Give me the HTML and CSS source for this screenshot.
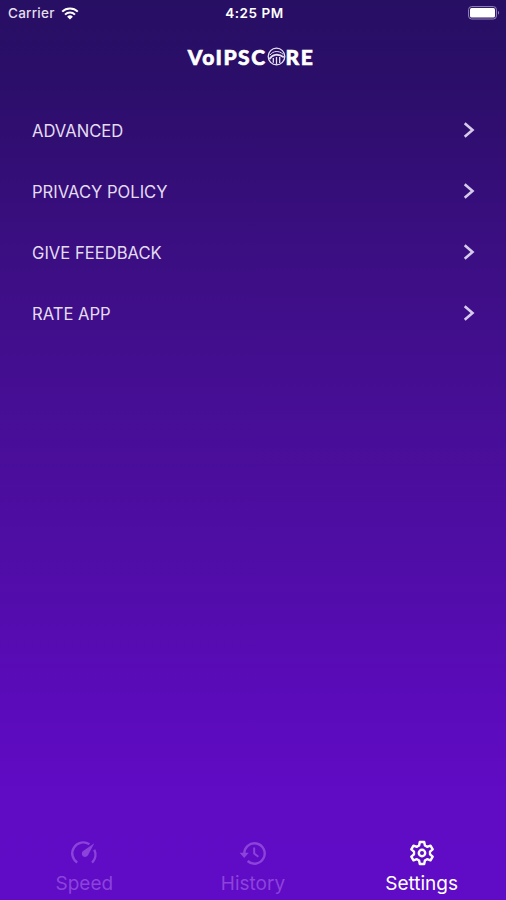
FILE: index.html
```html
<!DOCTYPE html>
<html lang="en">
<head>
  <meta charset="UTF-8">
  <meta name="viewport" content="width=device-width, initial-scale=1.0">
  <title>VoIPSCORE</title>
  <link rel="stylesheet" href="styles.css">
</head>
<body>
  <div class="status-bar">
    <div class="carrier">
      <span>Carrier</span>
      <svg width="18" height="13" viewBox="0 0 18 13" fill="none" stroke="#fff" stroke-width="2">
        <path d="M1.2 4.6a11.2 11.2 0 0 1 15.6 0M4 7.6a7.2 7.2 0 0 1 10 0"/>
        <path d="M6.1 9.7a4.2 4.2 0 0 1 5.8 0L9 12.6z" fill="#fff" stroke="none"/>
      </svg>
    </div>
    <span class="time">4:25 PM</span>
    <div class="battery">
      <svg width="33" height="14" viewBox="0 0 33 14">
        <rect x="0.6" y="0.6" width="27.8" height="12.4" rx="3" fill="none" stroke="#9689b9" stroke-width="1"/>
        <rect x="2" y="2" width="25" height="9.6" rx="1.5" fill="#fff"/>
        <path d="M30 4.8q2.2 2 0 4z" fill="#9689b9"/>
      </svg>
    </div>
  </div>

  <header class="logo">
    <span class="wordmark">VoIPSC</span>
    <svg width="19" height="19" viewBox="0 0 19 19" fill="none" stroke="#e6e1f2">
      <circle cx="9.5" cy="9.5" r="8.3" stroke-width="1.3"/>
      <path d="M3 8C6 3.8 12 3.2 16 7.2" stroke-width="1"/>
      <path d="M2.5 12C5 7.5 11 6 16.8 10.2" stroke-width="1.9"/>
      <path d="M6.3 11v4.8M9.5 10v7.5M12.7 10v6" stroke-width="1.3"/>
    </svg>
    <span class="wordmark">RE</span>
  </header>

  <nav class="menu">
    <a class="menu-item"><span>ADVANCED</span>
      <svg width="12" height="18" viewBox="0 0 12 18"><path d="M1.7 1.3L9.5 8l-7.8 6.7"/></svg></a>
    <a class="menu-item"><span>PRIVACY POLICY</span>
      <svg width="12" height="18" viewBox="0 0 12 18"><path d="M1.7 1.3L9.5 8l-7.8 6.7"/></svg></a>
    <a class="menu-item"><span>GIVE FEEDBACK</span>
      <svg width="12" height="18" viewBox="0 0 12 18"><path d="M1.7 1.3L9.5 8l-7.8 6.7"/></svg></a>
    <a class="menu-item"><span>RATE APP</span>
      <svg width="12" height="18" viewBox="0 0 12 18"><path d="M1.7 1.3L9.5 8l-7.8 6.7"/></svg></a>
  </nav>

  <footer class="tabs">
    <div class="tab">
      <svg width="28" height="28" viewBox="0 0 28 28" fill="none" stroke="currentColor" stroke-width="2.4">
        <path d="M7.2 23.6A10.9 10.9 0 0 1 19.4 5.2M24.3 10.8a10.9 10.9 0 0 1-2.2 12.8"/>
        <path d="M24.3 4.3L18 16.2a3.3 3.3 0 1 1-4.9-4.2z" fill="currentColor" stroke="none"/>
      </svg>
      <span>Speed</span>
    </div>
    <div class="tab">
      <svg width="28" height="28" viewBox="0 0 28 28" fill="none" stroke="currentColor" stroke-width="2.4">
        <path d="M5.3 15.2A10.2 10.2 0 1 1 8.6 22"/>
        <path d="M15.2 8.5v6.1l4.2 3.1" stroke-width="2"/>
        <path d="M.6 13.8h9.2L5.2 18.9z" fill="currentColor" stroke="none"/>
      </svg>
      <span>History</span>
    </div>
    <div class="tab active">
      <svg width="28" height="28" viewBox="0 0 28 28" fill="none" stroke="currentColor" stroke-width="2.4" stroke-linejoin="round">
        <path d="M11.8 3h4.4l.7 3.5 2.2 1.3 3.4-1.2 2.2 3.8L22 12.7v2.6l2.7 2.3-2.2 3.8-3.4-1.2-2.2 1.3-.7 3.5h-4.4l-.7-3.5-2.2-1.3-3.4 1.2-2.2-3.8L6 15.3v-2.6l-2.7-2.3 2.2-3.8 3.4 1.2 2.2-1.3z"/>
        <circle cx="14" cy="14" r="3.2"/>
      </svg>
      <span>Settings</span>
    </div>
  </footer>
</body>
</html>
```

FILE: styles.css
```css
* { box-sizing: border-box; }
body {
  margin: 0;
  height: 900px;
  display: flex;
  flex-direction: column;
  overflow: hidden;
  font-family: Inter, "Liberation Sans", sans-serif;
  color: #fff;
  background: linear-gradient(#270f64 0, #2b0e69 80px, #3b0e82 250px, #460e94 400px, #4f0da5 550px, #5b0bba 700px, #600bc4 790px, #600bc5 100%);
}
.status-bar {
  display: grid;
  grid-template-columns: 1fr auto 1fr;
  align-items: center;
  height: 26px;
  padding: 0 5px 0 8px;
  font-size: 13.5px;
}
.carrier {
  display: flex;
  align-items: center;
  gap: 6px;
  color: #e3dfec;
  font-weight: 500;
  letter-spacing: 0.25px;
}
.time {
  font-weight: 600;
  letter-spacing: 0.55px;
}
.battery {
  display: flex;
  justify-content: flex-end;
}
.logo {
  display: flex;
  justify-content: center;
  align-items: center;
  height: 60px;
  padding-right: 4px;
  font-family: Lato, sans-serif;
  font-weight: 900;
  font-size: 21px;
  line-height: 22px;
  letter-spacing: 1.5px;
  -webkit-text-stroke: 0.6px #fff;
}
.wordmark {
  padding-top: 2px;
}
.menu {
  flex: 1;
  padding: 14px 31px 0 32px;
}
.menu-item {
  display: flex;
  justify-content: space-between;
  align-items: center;
  height: 61px;
  font-size: 16.6px;
  color: #e3dcf2;
}
.menu-item span {
  padding-top: 1px;
}
.menu-item svg {
  fill: none;
  stroke: #d6cbea;
  stroke-width: 2.6;
}
.tabs {
  display: grid;
  grid-template-columns: repeat(3, 1fr);
  height: 61px;
}
.tab {
  display: flex;
  flex-direction: column;
  align-items: center;
  font-size: 19px;
  line-height: 34px;
  color: #8b43dc;
}
.tab.active { color: #fff; }
```
